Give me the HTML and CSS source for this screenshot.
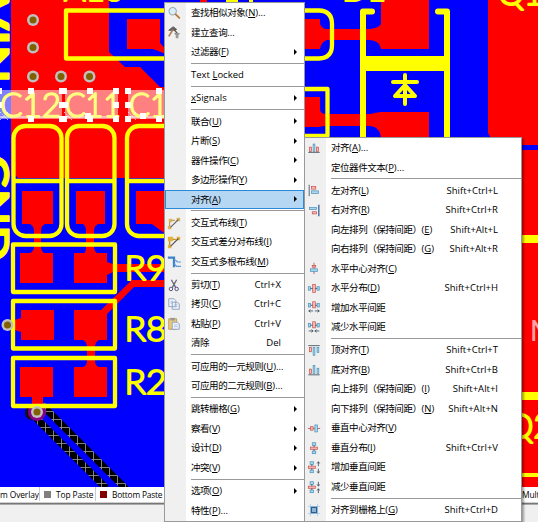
FILE: index.html
```
<!DOCTYPE html>
<html lang="zh-CN">
<head>
<meta charset="utf-8">
<title>PCB</title>
<link rel="stylesheet" href="styles.css">
</head>
<body>
<main class="app">
<svg class="board" viewBox="0 0 538 487" width="538" height="487">
  <defs>
    <g id="via"><circle r="6" fill="#c0c0c0"/><circle r="3.5" fill="#806000"/></g>
    <g id="h"><rect x="-3" y="-3" width="6" height="6" fill="#fff"/></g>
    <pattern id="hatch" width="8" height="8" patternUnits="userSpaceOnUse"><rect width="8" height="8" fill="#000"/><path d="M0 3.500H8M5.500 0V8" stroke="#a0a0a0" stroke-width=".8"/></pattern>
  </defs>
  <rect width="538" height="487" fill="#00f"/>
  <g fill="#f00">
    <path d="M11 0H109V52L125 67H140L160 87H164V178H18L16 176H11Z"/>
    <path d="M127 19H160V43L166 49V54L153 49H127ZM200 0h7v3h-7z"/>
    <path d="M22 191H53V224H45Q41 226 41 231V248Q42 253 45 253H53V283H20V253H30Q33 252 34 248V231Q34 226 30 224H22Z"/>
    <path d="M76 191H105V224H98Q94 226 94 231V248Q95 253 98 253H107V262L113 264H164V272H113L107 275V283H74V253H84Q86 252 86 248V231Q86 226 83 224H76Z"/>
    <path d="M136 191H164V233L152 224H136Z"/>
    <path d="M21 310H54V340H21V332L8 328V322L21 318Z"/>
    <path d="M74 310H101L132 280H164V287H134L107 314V340H99Q95 342 95 347V360Q95 366 99 367H107V397H74V367H83Q87 366 87 360V347Q87 342 83 340H74Z"/>
    <path d="M304 19H320V24Q322 29 327 29H370Q379 28 381 24V0H429V49H381Q380 41 370 40H327Q321 42 320 49H304Z"/>
    <path d="M304 97H320V110Q321 114 326 114H370L380 112H429V140H381Q381 127 370 126H327Q321 126 320 127H304Z"/>
    <path d="M488 0H538V145H495L488 133ZM520 150H538V487H520Z"/>
  </g>
  <g fill="none" stroke="url(#hatch)" stroke-width="7"><path d="M28 410L106 488M42 405L126 489"/></g>
  <circle cx="32" cy="413" r="7" fill="#111"/><circle cx="37" cy="412" r="9" fill="#808"/>
  <path fill="#f00" d="M20 367H53V397H43V405H32V397H20Z"/>
  <g fill="none" stroke="#ff0" stroke-width="4.3" stroke-linejoin="round">
    <path d="M180 10.5H66V58.5H180"/>
    <rect x="13.5" y="126" width="48" height="110" rx="12"/><path d="M13 181H62M67 181H115M127 181H170"/>
    <rect x="67" y="126" width="47.5" height="110" rx="12"/>
    <rect x="127" y="126" width="60" height="110" rx="12"/>
    <rect x="13" y="244.5" width="102" height="47.5"/><rect x="13" y="301" width="102" height="47.5"/><rect x="13" y="358" width="102" height="48"/>
    <path d="M300 10.5H319Q332 11 332 24V45Q332 58 319 58.5H300M300 89H327.5V136H300"/>
  </g>
  <g fill="none" stroke="#ff0" stroke-width="6" stroke-linecap="round" stroke-linejoin="round"><path d="M372 11.500H363V145M438 11.500H447V145"/><path d="M363 63.500H447" stroke-width="15" stroke-linecap="butt"/>
  <path d="M393 82H417M405 75V104M405 85L395 96H415Z" stroke-width="4"/></g>
  <g fill="#ff0"><path d="M520 235h18v8h-18zM520 392h18v8h-18zM520 473h18v4h-18z"/></g>
  <g fill="#ff0"><path d="M226 0h12v2h-12zM249 0h4v2h-4z"/></g>
  <g class="silk">
    <text x="124.500" y="280" textLength="42" lengthAdjust="spacingAndGlyphs">R9</text>
    <text x="124.500" y="341" textLength="42" lengthAdjust="spacingAndGlyphs">R8</text>
    <text x="124.500" y="394" textLength="42" lengthAdjust="spacingAndGlyphs">R2</text>
    <text x="64" y="1">A13</text><text x="342" y="1">D1</text><text x="498" y="5">Q1</text><text x="508" y="438" textLength="44" lengthAdjust="spacingAndGlyphs">Q2</text>
    <text class="net" transform="translate(-20 -4) rotate(90)" textLength="87" lengthAdjust="spacingAndGlyphs">VIN</text>
    <text class="net" transform="translate(-20 155) rotate(90)" textLength="106" lengthAdjust="spacingAndGlyphs">GND</text>
  </g>
  <text class="pin" x="530" y="341">N</text>
  <g fill="#fff" fill-opacity=".5"><path d="M0 90H62V119H0ZM65 90H118V119H65ZM128 90H164V119H128Z"/></g>
  <path d="M0 117H118M128 117H164" stroke="#fff"/>
  <g class="silk selected">
    <text x="0" y="117" textLength="61" lengthAdjust="spacingAndGlyphs">C12</text>
    <text x="65" y="117" textLength="56" lengthAdjust="spacingAndGlyphs">C11</text>
    <text x="129" y="117" textLength="39" lengthAdjust="spacingAndGlyphs">C1</text>
  </g>
  <path d="M0 112l8 8M0 120l8-8M64 112l8 8M64 120l8-8M128 112l8 8M128 120l8-8" stroke="#fff" stroke-width=".7" stroke-dasharray="1.500 1"/>
  <use href="#h" x="-1" y="91"/><use href="#h" x="-1" y="105"/><use href="#h" x="31" y="91"/><use href="#h" x="31" y="119"/>
  <use href="#h" x="62" y="91"/><use href="#h" x="64" y="91"/><use href="#h" x="62" y="105"/><use href="#h" x="65" y="105"/><use href="#h" x="62" y="119"/><use href="#h" x="64" y="119"/>
  <use href="#h" x="90" y="91"/><use href="#h" x="90" y="119"/><use href="#h" x="88" y="116"/><use href="#h" x="116" y="91"/><use href="#h" x="116" y="105"/><use href="#h" x="116" y="119"/>
  <use href="#h" x="128" y="91"/><use href="#h" x="128" y="105"/><use href="#h" x="128" y="119"/><use href="#h" x="143" y="116"/><use href="#h" x="159" y="91"/><use href="#h" x="159" y="119"/>
  <use href="#via" x="33" y="20"/><use href="#via" x="33" y="47.500"/><use href="#via" x="33" y="76.500"/><use href="#via" x="61" y="76.500"/><use href="#via" x="89.500" y="76.500"/><use href="#via" x="7.500" y="325"/><use href="#via" x="37" y="412"/>
</svg>
<footer class="layers">
  <span class="layer first">m Overlay</span><span class="layer"><i class="swatch gray"></i>Top Paste</span><span class="layer"><i class="swatch maroon"></i>Bottom Paste</span><span class="layer last">Mult</span>
</footer>
</main>
<nav class="menu context" id="context"></nav>
<nav class="menu submenu" id="submenu"></nav>
<script src="menu.js"></script>
</body>
</html>
```
FILE: styles.css
```
* { box-sizing: border-box; }
body { margin: 0; width: 538px; height: 522px; overflow: hidden; background: #f0f0f0; font-family: "Open Sans", "Noto Sans CJK SC", sans-serif; font-size: 9.5px; color: #000; }
.app { display: flex; flex-direction: column; height: 522px; }
.board { display: block; flex: none; }
.silk text { font-family: Lato, sans-serif; font-weight: 300; font-size: 33px; fill: #ff0; stroke: #ff0; stroke-width: 2px; stroke-linejoin: round; stroke-linecap: round; }
.silk.selected text { fill: #ffff80; stroke: #ffff80; stroke-width: 1.6px; }
.silk .net { font-weight: bold; font-size: 40px; stroke-width: 1px; }
.pin { font: 29px Roboto, sans-serif; fill: #ffa0a0; }
.layers { display: flex; height: 15px; flex: none; background: #fff; box-shadow: 0 1px #d0d0d0, 0 2px #777, 0 3px #aaa; }
.layer { display: flex; align-items: center; gap: 5px; height: 14px; padding-left: 4px; border-left: 1px solid #ccc; white-space: nowrap; font-size: 8.4px; letter-spacing: -.1px; width: 56px; }
.layer.first { width: 39px; padding: 0; border: 0; }
.layer:nth-child(3) { width: 80px; letter-spacing: -.2px; }
.layer.last { margin-left: auto; width: 16px; padding: 0; border: 0; }
.swatch { width: 7px; height: 7px; flex: none; }
.gray { background: #808080; }
.maroon { background: #800000; }
.menu { position: absolute; background: linear-gradient(90deg, #f0f0f0 21px, #fff 21px); border: 1px solid #999; }
.context { left: 164px; top: 2px; width: 141px; height: 520px; }
.submenu { left: 304px; top: 137px; width: 218px; height: 385px; box-shadow: 2px 2px 2px rgba(0,0,0,.35); }
.item { display: grid; grid-template-columns: 26px 1fr auto; align-items: center; height: 19.5px; white-space: nowrap; line-height: 19.5px; }
.item.active { background: #b5d7f3; outline: 1px solid #2b8ad8; outline-offset: -1px; }
.icon { width: 14px; height: 14px; margin-left: 2px; }
.han { font-size: 9.5px; letter-spacing: -.45px; }
.shortcut { padding-right: 23px; }
.arrow { width: 0; margin-right: 7px; border: 3px solid transparent; border-left: 3.5px solid #000; border-right: 0; }
.sep { height: 3.7px; margin-left: 26px; display: flex; align-items: center; }
.sep::after { content: ""; height: 1px; flex: 1; background: #999; }
u { text-decoration-thickness: .7px; text-underline-offset: 1px; }
```
FILE: menu.js
```
const box = (x, y, w, h, red) => `<rect x="${x}" y="${y}" width="${w}" height="${h}" fill="${red ? '#f6b9b5' : '#a8d8ee'}" stroke="${red ? '#c7504c' : '#4a90b8'}" stroke-width=".8"/>`;
const line = (d, c = '#456', w = 1) => `<path d="${d}" fill="none" stroke="${c}" stroke-width="${w}"/>`;
const hd = box(1.5, 6.500, 2.5, 4) + box(6.5, 4, 3, 9, 1) + box(11.5, 6.500, 2.5, 4) + line('M4 8.500h2.500M9.500 8.500h2');
const hs = box(1.5, 4, 2.5, 4) + box(6.5, 2, 3, 7, 1) + box(11.500, 4, 2.5, 4) + line('M4 6h2.500M9.500 6h2');
const vd = box(6, 2, 4, 3) + box(4, 7, 8, 2.500, 1) + box(6, 11.500, 4, 3) + line('M8 5v2M8 9.500v2');
const vs = box(3.5, 2, 4, 3) + box(1.5, 7, 8, 2.500, 1) + box(3.5, 11.500, 4, 3) + line('M5.500 5v2M5.500 9.500v2');
const icons = {
  find: '<circle cx="6.500" cy="6" r="4.200" fill="#d8effd" stroke="#9aa7b5" stroke-width="1.200"/><path d="M10 9.500l4 4" stroke="#b57a3c" stroke-width="2.200" stroke-linecap="round"/>',
  query: '<path d="M2 6l5-4 4 3-3 1z" fill="#666" stroke="#555"/><path d="M7 5L2 13" stroke="#b47645" stroke-width="1.800"/><path d="M8 5l4 5" stroke="#555" stroke-width="1.500"/><path d="M8 9h7l-2 3v3h-3v-3z" fill="#999"/>',
  route: line('M3 14V5h6', '#b99a48', 1.300) + '<path d="M2 3h4v4H2zM11 2h4v4h-4zM1 11h4v4H1z" fill="#d9b65c"/>' + line('M4 13L13 4', '#666', 1.300),
  diff: line('M3 14V5h7', '#c28c1c', 1.600) + '<path d="M1 2h6v5H1zM11 2h4v4h-4zM1 11h4v4H1z" fill="#e2b13c"/>' + line('M4 13L13 4', '#555', 1.300),
  multi: line('M1 3h7v11', '#3d83c9', 2.600) + line('M8 6h2l2 2h4M8 10l3 3h5', '#5c9ad6', 1.400),
  cut: line('M5 2l5 9M11 2L6 11', '#667', 1.500) + '<circle cx="4.500" cy="12.500" r="2" fill="none" stroke="#447"/><circle cx="11" cy="12.500" r="2" fill="none" stroke="#447"/>',
  copy: '<path d="M2 2h6l2 2v7H2zM6 6h6l2 2v6H6z" fill="#eef4fb" stroke="#8d9cba"/>' + line('M4 5h3M4 7h2M8 9h4M8 11h4', '#9bafce', .8),
  paste: '<path d="M2 2h9v12H2z" fill="#e9ca7e" stroke="#b99a55"/><path d="M4 1h5v3H4z" fill="#999"/><path d="M6 6h6l2 2v6H6z" fill="#eef4fb" stroke="#8d9cba"/>' + line('M8 9h4M8 11h4', '#9bafce', .8),
  align: box(3, 7, 2, 5, 1) + box(7, 3.500, 2, 8.500) + box(11, 7, 2, 5, 1) + line('M1.500 13h13'),
  left: line('M2.500 2v13') + box(5, 4, 5, 3, 1) + box(5, 9, 8, 3),
  right: line('M13.500 2v13', '#35639a', 1.500) + box(3, 5, 8, 2.500) + box(6, 10, 5, 2.500, 1),
  hcenter: line('M8 2v13', '#b55') + box(6, 5, 4, 2, 1) + box(4, 9, 8, 3),
  hd, vd,
  hinc: hs + line('M2 12.500h5M9 12.500h5M4 11l-2 1.500 2 1.500M12 11l2 1.500-2 1.500'),
  hdec: hs + line('M2 12.500h5M9 12.500h5M5 11l2 1.500-2 1.500M11 11l-2 1.500 2 1.500'),
  top: line('M1.500 3h13') + box(3, 5, 2, 5, 1) + box(7, 5, 2, 9) + box(11.500, 5, 2, 6),
  bottom: line('M1.500 13.500h13') + box(3, 7, 2, 5, 1) + box(7, 3, 2, 9) + box(11.500, 6, 2, 6),
  vcenter: line('M1 8.500h14', '#b55') + box(4, 6.500, 3, 4, 1) + box(9, 4.500, 3, 8),
  vinc: vs + line('M13 2v5M13 10v5M11.500 4l1.500-2 1.500 2M11.500 13l1.500 2 1.500-2'),
  vdec: vs + line('M13 2v5M13 10v5M11.500 5l1.500 2 1.500-2M11.500 12l1.500-2 1.500 2'),
  grid: line('M4 1v14M12 1v14M1 4h14M1 12h14', '#a9d0f2', 1) + '<rect x="5" y="5" width="6" height="6" fill="#8cb7d9" stroke="#345f86" stroke-width="1.500"/>'
};
const context = [
  ['查找相似对象(_N)...', 'find'], ['建立查询...', 'query'], ['过滤器(_F)', '', '>'], 0,
  ['Text _Locked'], 0, ['_xSignals', '', '>'], 0,
  ['联合(_U)', '', '>'], ['片断(_S)', '', '>'], ['器件操作(_C)', '', '>'], ['多边形操作(_Y)', '', '>'], ['对齐(_A)', '', '>', 1], 0,
  ['交互式布线(_T)', 'route'], ['交互式差分对布线(_I)', 'diff'], ['交互式多根布线(_M)', 'multi'], 0,
  ['剪切(_T)', 'cut', 'Ctrl+X'], ['拷贝(_C)', 'copy', 'Ctrl+C'], ['粘贴(_P)', 'paste', 'Ctrl+V'], ['清除', '', 'Del'], 0,
  ['可应用的一元规则(_U)...'], ['可应用的二元规则(_B)...'], 0,
  ['跳转栅格(_G)', '', '>'], ['察看(_V)', '', '>'], ['设计(_D)', '', '>'], ['冲突(_V)', '', '>'], 0,
  ['选项(_O)', '', '>'], ['特性(_P)...']
];
const submenu = [
  ['对齐(_A)...', 'align'], ['定位器件文本(_P)...'], 0,
  ['左对齐(_L)', 'left', 'Shift+Ctrl+L'], ['右对齐(_R)', 'right', 'Shift+Ctrl+R'],
  ['向左排列（保持间距）(_E)', '', 'Shift+Alt+L'], ['向右排列（保持间距）(_G)', '', 'Shift+Alt+R'],
  ['水平中心对齐(_C)', 'hcenter'], ['水平分布(_D)', 'hd', 'Shift+Ctrl+H'], ['增加水平间距', 'hinc'], ['减少水平间距', 'hdec'], 0,
  ['顶对齐(_T)', 'top', 'Shift+Ctrl+T'], ['底对齐(_B)', 'bottom', 'Shift+Ctrl+B'],
  ['向上排列（保持间距）(_I)', '', 'Shift+Alt+I'], ['向下排列（保持间距）(_N)', '', 'Shift+Alt+N'],
  ['垂直中心对齐(_V)', 'vcenter'], ['垂直分布(_I)', 'vd', 'Shift+Ctrl+V'], ['增加垂直间距', 'vinc'], ['减少垂直间距', 'vdec'], 0,
  ['对齐到栅格上(_G)', 'grid', 'Shift+Ctrl+D']
];
const format = label => label.replace(/[^\x00-\x7f]+/g, '<span class="han">$&</span>').replace(/_(.)/, '<u>$1</u>');
const render = row => {
  if (!row) return '<div class="sep"></div>';
  const [label, icon, right, active] = row;
  const glyph = icon ? `<svg class="icon" viewBox="0 0 16 16">${icons[icon]}</svg>` : '<span></span>';
  const end = right === '>' ? '<span class="arrow"></span>' : right ? `<span class="shortcut">${right}</span>` : '';
  return `<div class="item${active ? ' active' : ''}">${glyph}<span>${format(label)}</span>${end}</div>`;
};
document.getElementById('context').innerHTML = context.map(render).join('');
document.getElementById('submenu').innerHTML = submenu.map(render).join('');
```
